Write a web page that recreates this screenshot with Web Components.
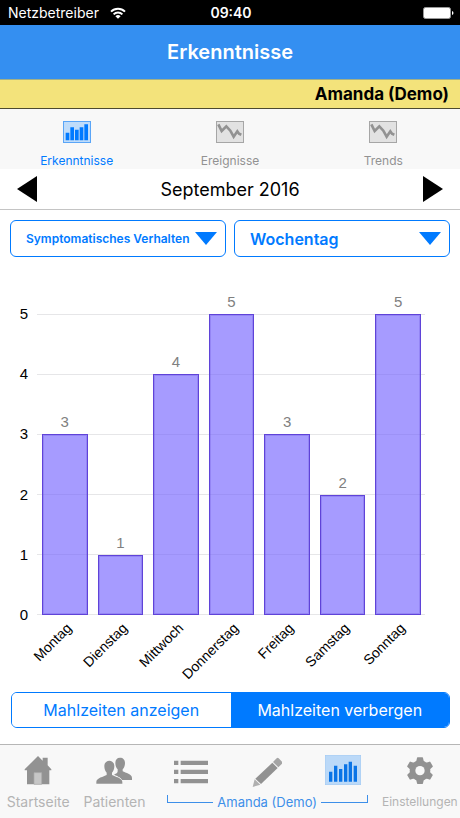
<!DOCTYPE html>
<html lang="de">
<head>
    <meta charset="UTF-8">
    <meta name="viewport" content="width=device-width, initial-scale=1.0">
    <title>Erkenntnisse</title>
    <style>
        html, body {
            height: 100%;
            margin: 0;
        }

        body {
            font-family: Inter, "Liberation Sans", sans-serif;
            color: #000;
            background: #fff;
            --blue: #007aff;
            --gray: #929292;
            --bar: #f8f8f8;
        }
    </style>
</head>
<body>
    <template id="app-screen-tmpl">
        <style>
            :host {
                display: flex;
                flex-direction: column;
                min-height: 100%;
            }

            .pickers {
                display: grid;
                grid-template-columns: 1fr 1fr;
                gap: 8px;
                padding: 10px 10px 0;
            }

            main {
                flex: 1;
                display: flex;
                flex-direction: column;
            }
        </style>
        <slot name="top"></slot>
        <main>
            <div class="pickers"><slot name="picker"></slot></div>
            <slot></slot>
        </main>
        <slot name="bottom"></slot>
    </template>

    <template id="status-bar-tmpl">
        <style>
            :host {
                display: grid;
                grid-template-columns: 1fr auto 1fr;
                align-items: center;
                height: 25px;
                padding: 0 6px 0 8px;
                color: #fff;
                background: #000;
                font-size: 14px;
            }

            .carrier {
                display: flex;
                align-items: center;
                gap: 11px;
            }

            .time {
                font-weight: 600;
            }

            .battery {
                justify-self: end;
            }

            svg {
                display: block;
            }
        </style>
        <div class="carrier">
            <slot></slot>
            <svg width="16" height="12" viewBox="0 0 16 12" fill="none" stroke="#fff" stroke-width="2">
                <path d="M1 4.6a10 10 0 0 1 14 0M3.6 7.4a6.3 6.3 0 0 1 8.8 0"/>
                <path d="M8 11.8L5.4 9.2a3.7 3.7 0 0 1 5.2 0z" fill="#fff" stroke="none"/>
            </svg>
        </div>
        <div class="time"><slot name="time"></slot></div>
        <svg class="battery" width="31" height="12" viewBox="0 0 31 12">
            <rect x=".5" y=".5" width="27" height="11" rx="2" fill="#fff" stroke="#999"/>
            <path d="M29 4q1.5 .5 1.5 2t-1.5 2z" fill="#fff"/>
        </svg>
    </template>

    <template id="title-bar-tmpl">
        <style>
            :host {
                display: block;
                color: #fff;
                background: #348ff1;
            }

            h1 {
                margin: 0;
                font-size: 20px;
                font-weight: 600;
                line-height: 54px;
                text-align: center;
            }
        </style>
        <h1><slot></slot></h1>
    </template>

    <template id="patient-banner-tmpl">
        <style>
            :host {
                display: block;
                padding: 0 11px;
                border-top: 1px solid #a3b087;
                border-bottom: 1px solid #4c4a30;
                background: #f3e37b;
                font-size: 17px;
                font-weight: 700;
                line-height: 28px;
                text-align: right;
            }
        </style>
        <slot></slot>
    </template>

    <template id="view-tabs-tmpl">
        <style>
            :host {
                display: block;
                background: var(--bar);
            }

            nav {
                display: grid;
                grid-template-columns: repeat(3, 1fr);
            }
        </style>
        <nav><slot></slot></nav>
    </template>

    <template id="tab-button-tmpl">
        <style>
            :host {
                display: block;
                color: var(--gray);
            }

            :host([active]) {
                color: var(--blue);
            }

            button {
                display: flex;
                flex-direction: column;
                align-items: center;
                gap: 10px;
                width: 100%;
                height: 60px;
                padding: 12px 0 0;
                border: 0;
                background: none;
                color: inherit;
                font: 12px/16px Inter, "Liberation Sans", sans-serif;
                white-space: nowrap;
            }

            :host([bar]) button {
                gap: 9px;
                height: 73px;
                padding-top: 10px;
                font-size: 14px;
            }

            :host([bar][compact]) button {
                font-size: 12px;
            }

            :host([bar][bare]) button {
                height: 46px;
            }

            :host([bar]) span {
                color: #b4b4b4;
            }
        </style>
        <button type="button"><app-icon></app-icon><span><slot></slot></span></button>
    </template>

    <template id="month-pager-tmpl">
        <style>
            :host {
                display: flex;
                align-items: center;
                justify-content: space-between;
                height: 40px;
                padding: 0 17px;
                border-bottom: 1px solid #c4c4c4;
                font-size: 18px;
            }

            button {
                padding: 0;
                border: 0;
                background: none;
            }

            svg {
                display: block;
            }
        </style>
        <button type="button" aria-label="Vorheriger Monat">
            <svg width="20" height="28" viewBox="0 0 20 28"><path d="M0 14L20 1v26z"/></svg>
        </button>
        <slot></slot>
        <button type="button" aria-label="Nächster Monat">
            <svg width="20" height="28" viewBox="0 0 20 28"><path d="M20 14L0 1v26z"/></svg>
        </button>
    </template>

    <template id="drop-picker-tmpl">
        <style>
            :host {
                display: grid;
                align-items: center;
                color: var(--blue);
            }

            select, svg {
                grid-area: 1 / 1;
            }

            select {
                appearance: none;
                width: 100%;
                height: 37px;
                padding: 0 28px 0 15px;
                border: 1px solid var(--blue);
                border-radius: 6px;
                background: #fff;
                color: inherit;
                font: 600 16px Inter, "Liberation Sans", sans-serif;
            }

            :host([small]) select {
                font-size: 12px;
            }

            svg {
                justify-self: end;
                margin-right: 9px;
                pointer-events: none;
            }
        </style>
        <select></select>
        <svg width="22" height="13" viewBox="0 0 22 13" fill="currentColor"><path d="M0 0h22L11 13z"/></svg>
    </template>

    <template id="bar-chart-tmpl">
        <style>
            :host {
                display: grid;
                grid-template-columns: 28px minmax(0, 1fr);
                column-gap: 9px;
                padding: 57px 35px 0 0;
                font: 15px/18px "Liberation Sans", Arial, sans-serif;
            }

            .scale, .lines {
                display: flex;
                flex-direction: column;
                justify-content: space-between;
            }

            /* the first and last number are centred on the ends of the plot */
            .scale {
                margin: -9px 0;
                text-align: right;
            }

            .plot {
                display: grid;
                height: 301px;
            }

            .lines, .bars {
                grid-area: 1 / 1;
            }

            .lines i {
                height: 1px;
                background: #e6e6e8;
            }

            .bars, .days {
                display: flex;
                gap: 10px;
                padding: 0 4px 0 5px;
            }

            .bars {
                align-items: flex-end;
            }

            .bar {
                flex: 1;
                box-sizing: border-box;
                height: calc(var(--share) * 100%);
                border: 1px solid #5f43d8;
                outline: 1px solid rgba(95, 67, 216, .25);
                outline-offset: -2px;
                background: rgba(112, 94, 255, .62);
            }

            .bar b {
                display: block;
                margin-top: -22px;
                color: #808080;
                font-weight: 400;
                text-align: center;
            }

            .days {
                grid-column: 2;
                height: 70px;
                padding-top: 4px;
                font-size: 14px;
            }

            .day {
                flex: 1;
                display: flex;
                justify-content: flex-end;
                align-items: flex-start;
                min-width: 0;
            }

            .day span {
                flex: none;
                margin-right: 25px;
                transform: rotate(-45deg);
                transform-origin: top right;
            }
        </style>
        <div class="scale"></div>
        <div class="plot">
            <div class="lines"></div>
            <div class="bars"></div>
        </div>
        <div class="days"></div>
    </template>

    <template id="segment-control-tmpl">
        <style>
            :host {
                display: flex;
                margin: 3px 10px 16px 11px;
                border: 1px solid var(--blue);
                border-radius: 6px;
                overflow: hidden;
            }
        </style>
        <slot></slot>
    </template>

    <template id="segment-button-tmpl">
        <style>
            :host {
                display: block;
                flex: 1 1 0;
                min-width: 0;
            }

            button {
                width: 100%;
                height: 34px;
                padding: 0;
                border: 0;
                background: #fff;
                color: var(--blue);
                font: 16px Inter, "Liberation Sans", sans-serif;
            }

            :host([selected]) button {
                background: var(--blue);
                color: #fff;
            }
        </style>
        <button type="button"><slot></slot></button>
    </template>

    <template id="tab-bar-tmpl">
        <style>
            :host {
                display: block;
                padding-right: 2px;
                border-top: 1px solid #b6b6b6;
                background: var(--bar);
            }

            nav {
                display: grid;
                grid-template-columns: repeat(6, minmax(0, 1fr));
            }
        </style>
        <nav><slot></slot></nav>
    </template>

    <template id="tab-group-tmpl">
        <style>
            :host {
                display: block;
                grid-column: span 3;
                color: #3d8fe9;
            }

            .tabs {
                display: grid;
                grid-template-columns: repeat(3, 1fr);
            }

            .name {
                display: flex;
                gap: 4px;
                padding: 3px 14px 0;
                font-size: 13px;
                line-height: 16px;
                white-space: nowrap;
            }

            .name i {
                flex: 1;
                height: 7px;
                margin-top: 1px;
                border: 0 solid;
                border-bottom-width: 1px;
            }

            .name i:first-child {
                border-left-width: 1px;
            }

            .name i:last-child {
                border-right-width: 1px;
            }
        </style>
        <div class="tabs"><slot></slot></div>
        <div class="name"><i></i><slot name="name"></slot><i></i></div>
    </template>

    <app-screen>
        <status-bar slot="top">Netzbetreiber<span slot="time">09:40</span></status-bar>
        <title-bar slot="top">Erkenntnisse</title-bar>
        <patient-banner slot="top">Amanda (Demo)</patient-banner>
        <view-tabs slot="top">
            <tab-button icon="insights" active>Erkenntnisse</tab-button>
            <tab-button icon="trend">Ereignisse</tab-button>
            <tab-button icon="trend">Trends</tab-button>
        </view-tabs>
        <month-pager slot="top">September 2016</month-pager>

        <drop-picker slot="picker" small label="Kategorie" value="Symptomatisches Verhalten"></drop-picker>
        <drop-picker slot="picker" label="Gruppierung" value="Wochentag"></drop-picker>

        <bar-chart max="5" data="Montag:3,Dienstag:1,Mittwoch:4,Donnerstag:5,Freitag:3,Samstag:2,Sonntag:5"></bar-chart>
        <segment-control>
            <segment-button>Mahlzeiten anzeigen</segment-button>
            <segment-button selected>Mahlzeiten verbergen</segment-button>
        </segment-control>

        <tab-bar slot="bottom">
            <tab-button bar icon="home">Startseite</tab-button>
            <tab-button bar icon="people">Patienten</tab-button>
            <tab-group>
                <tab-button bar bare icon="list" label="Liste"></tab-button>
                <tab-button bar bare icon="pencil" label="Eintrag"></tab-button>
                <tab-button bar bare active icon="chart" label="Auswertung"></tab-button>
                <span slot="name">Amanda (Demo)</span>
            </tab-group>
            <tab-button bar compact icon="gear">Einstellungen</tab-button>
        </tab-bar>
    </app-screen>

    <script>
        // drawn on a grid of three units per pixel
        const icons = {
            insights: [84, 66, `<rect x="1.5" y="1.5" width="81" height="63" fill="#bfdcfa" stroke="#5aa5f7" stroke-width="3"/>
                <path d="M8 58V35h11v23zM22 58V19h11v39zM36 58V26h11v32zM50 58V19h11v39zM64 58V10h11v48z"/>`],
            trend: [84, 66, `<rect x="1.5" y="1.5" width="81" height="63" fill="#e2e2e2" stroke="#a6a6a6" stroke-width="3"/>
                <path d="M7 10L17 30L31 16L43 29L53 47L64 31L69 38L76 41" fill="none" stroke="currentColor" stroke-width="8"/>`],
            home: [84, 90, `<path d="M2 43L42 3l14 14V8h15v23l11 12v3h-6v42H9V46H2z"/>
                <path d="M30 88V53h23v35z" fill="#c6c6c6" stroke="#aaa" stroke-width="2"/>`],
            people: [108, 90, `<path d="M72 8c9 0 15 6 15 16 0 8-3 15-7 19v6c9 5 28 8 28 20v6H78c-4-9-18-13-24-16 7-3 11-5 11-10v-6c-4-4-7-11-7-19 0-10 5-16 14-16z"/>
                <path d="M40 17c9 0 15 7 15 17 0 8-3 15-7 19v7c9 5 31 9 31 21v5H1v-5c0-12 22-16 31-21v-7c-4-4-7-11-7-19 0-10 6-17 15-17z" stroke="#f8f8f8" stroke-width="3" paint-order="stroke"/>`],
            list: [102, 90, `<path d="M0 17h13v13H0zM20 17h82v13H20zM0 44h13v13H0zM20 44h82v13H20zM0 72h13v13H0zM20 72h82v13H20z"/>`],
            pencil: [90, 96, `<path d="M63 21L74 10q3-3 6 0l10 10q3 3 0 6L79 37z" fill="#a5a5a5"/>
                <path d="M61 23L77 39L27 87L10 71z"/>
                <path d="M8 73L25 89L2 96z" fill="#b0b0b0"/>`],
            chart: [108, 90, `<rect x="1" y="1" width="106" height="88" fill="#bbd9f8" stroke="#a1c9f4" stroke-width="2"/>
                <path d="M12 80V50h10v30zM27 80V32h10v48zM42 80V42h10v38zM57 80V28h10v52zM71 80V20h10v60zM86 80V32h10v48z" fill="#0a74e6"/>`],
            gear: [84, 90, `<circle cx="42" cy="47" r="31"/>
                ${[0, 60, 120, 180, 240, 300].map(a => `<path d="M30 22L33 9q0-2 2-2h14q2 0 2 2l3 13z" transform="rotate(${a} 42 47)"/>`).join('')}
                <circle cx="42" cy="47" r="14" fill="#f8f8f8"/>`]
        };

        class Base extends HTMLElement {
            connectedCallback() {
                const tmpl = document.getElementById(this.localName + '-tmpl');
                this.attachShadow({ mode: 'open' }).append(tmpl.content.cloneNode(true));
                this.fill(this.shadowRoot);
            }

            fill() {}
        }

        customElements.define('app-icon', class extends HTMLElement {
            connectedCallback() {
                const [w, h, shapes] = icons[this.getAttribute('name')];
                this.attachShadow({ mode: 'open' }).innerHTML = `
                    <style>
                        :host { display: block; }
                        svg { display: block; }
                    </style>
                    <svg width="${w / 3}" height="${h / 3}" viewBox="0 0 ${w} ${h}" fill="currentColor" aria-hidden="true">${shapes}</svg>`;
            }
        });

        // the icon reads its name when it is attached, so it is set on the clone first
        customElements.define('tab-button', class extends HTMLElement {
            connectedCallback() {
                const content = document.getElementById('tab-button-tmpl').content.cloneNode(true);
                content.querySelector('app-icon').setAttribute('name', this.getAttribute('icon'));
                if (this.hasAttribute('label')) {
                    content.querySelector('button').setAttribute('aria-label', this.getAttribute('label'));
                }
                this.attachShadow({ mode: 'open' }).append(content);
            }
        });

        customElements.define('drop-picker', class extends Base {
            fill(root) {
                const select = root.querySelector('select');
                select.setAttribute('aria-label', this.getAttribute('label'));
                select.add(new Option(this.getAttribute('value')));
            }
        });

        customElements.define('bar-chart', class extends Base {
            fill(root) {
                const max = Number(this.getAttribute('max'));
                const rows = this.getAttribute('data').split(',').map(row => row.split(':'));
                const put = (name, html) => root.querySelector(name).innerHTML = html;
                let scale = '';
                let lines = '';
                for (let n = max; n >= 0; n--) {
                    scale += `<span>${n}</span>`;
                    lines += '<i></i>';
                }
                put('.scale', scale);
                put('.lines', lines);
                put('.bars', rows.map(([, n]) => `<div class="bar" style="--share: ${n / max}"><b>${n}</b></div>`).join(''));
                put('.days', rows.map(([day]) => `<div class="day"><span>${day}</span></div>`).join(''));
            }
        });

        for (const name of ['app-screen', 'status-bar', 'title-bar', 'patient-banner', 'view-tabs',
            'month-pager', 'segment-control', 'segment-button', 'tab-bar', 'tab-group']) {
            customElements.define(name, class extends Base {});
        }
    </script>
</body>
</html>
